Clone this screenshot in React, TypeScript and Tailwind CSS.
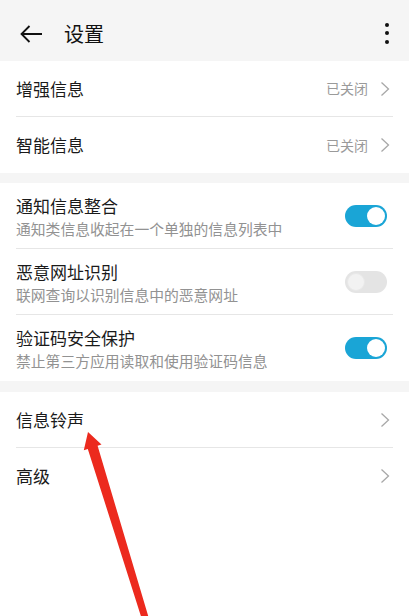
import { ReactNode } from "react";

const font = { fontFamily: '"Noto Sans CJK SC", "Noto Sans", sans-serif' };

function Chevron() {
  return (
    <svg width="10" height="16" viewBox="0 0 10 16" className="shrink-0">
      <polyline points="1.5,1.5 8.5,8 1.5,14.5" fill="none" stroke="#a8a8a8" strokeWidth="1.3" />
    </svg>
  );
}

function Toggle({ on }: { on: boolean }) {
  return (
    <div
      className={
        on
          ? "w-[42px] h-[22px] rounded-full bg-[#1aa5d6] flex items-center justify-end px-[2px]"
          : "w-[42px] h-[22px] rounded-full bg-[#e4e4e4] flex items-center justify-start px-[2px]"
      }
    >
      <div
        className={
          on
            ? "w-[18px] h-[18px] rounded-full bg-white"
            : "w-[18px] h-[18px] rounded-full bg-[#f2f2f2] border border-[#e8e8e8]"
        }
      />
    </div>
  );
}

function LinkRow({ title, value, last }: { title: string; value?: string; last?: boolean }) {
  return (
    <div className="px-4">
      <div
        className={
          last
            ? "h-[56px] flex items-center justify-between"
            : "h-[56px] flex items-center justify-between border-b border-[#e6e6e6]"
        }
      >
        <span className="text-[17px] text-[#1a1a1a]">{title}</span>
        <div className="flex items-center gap-[12px] pr-[3px]">
          {value && <span className="text-[14px] text-[#9a9a9a]">{value}</span>}
          <Chevron />
        </div>
      </div>
    </div>
  );
}

function SwitchRow({ title, desc, on, last }: { title: string; desc: string; on: boolean; last?: boolean }) {
  return (
    <div className="px-4">
      <div
        className={
          last
            ? "h-[66px] flex items-center justify-between"
            : "h-[66px] flex items-center justify-between border-b border-[#e6e6e6]"
        }
      >
        <div className="flex flex-col pt-[2px]">
          <span className="text-[17px] leading-[23px] text-[#1a1a1a]">{title}</span>
          <span className="text-[14.8px] leading-[23px] text-[#929292]">{desc}</span>
        </div>
        <div className="pr-[6px]">
          <Toggle on={on} />
        </div>
      </div>
    </div>
  );
}

function Section({ children }: { children: ReactNode }) {
  return <div className="bg-white">{children}</div>;
}

export default function App() {
  return (
    <div className="relative w-[409px] h-[616px] overflow-hidden bg-white" style={font}>
      <header className="h-[61px] bg-[#f5f5f5] flex items-center pt-[7px] pl-[19px] pr-[20px]">
        <svg width="24" height="20" viewBox="0 0 24 20">
          <path d="M23 10H2.5M10.5 2L2.5 10l8 8" fill="none" stroke="#111" strokeWidth="1.8" />
        </svg>
        <h1 className="ml-[21px] text-[20px] text-[#111] flex-1">设置</h1>
        <div className="flex flex-col gap-[4.5px] items-center -mt-[2px]">
          <span className="w-[4px] h-[4px] rounded-full bg-[#111]" />
          <span className="w-[4px] h-[4px] rounded-full bg-[#111]" />
          <span className="w-[4px] h-[4px] rounded-full bg-[#111]" />
        </div>
      </header>

      <Section>
        <LinkRow title="增强信息" value="已关闭" />
        <LinkRow title="智能信息" value="已关闭" last />
      </Section>
      <div className="h-[10px] bg-[#f5f5f5]" />

      <Section>
        <SwitchRow title="通知信息整合" desc="通知类信息收起在一个单独的信息列表中" on />
        <SwitchRow title="恶意网址识别" desc="联网查询以识别信息中的恶意网址" on={false} />
        <SwitchRow title="验证码安全保护" desc="禁止第三方应用读取和使用验证码信息" on last />
      </Section>
      <div className="h-[11px] bg-[#f5f5f5]" />

      <Section>
        <LinkRow title="信息铃声" />
        <LinkRow title="高级" last />
      </Section>

      <svg className="absolute inset-0 pointer-events-none" width="409" height="616" viewBox="0 0 409 616">
        <polygon
          points="88,432 101.5,444.5 97.6,445.8 148.5,617 141.5,618 87.8,448.9 83.8,450.2"
          fill="#ec2a1e"
        />
      </svg>
    </div>
  );
}
